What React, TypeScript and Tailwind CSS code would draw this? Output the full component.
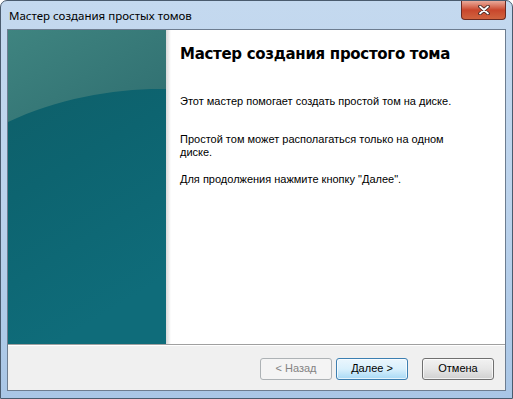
import React from 'react';

const uiFont = { fontFamily: 'Tahoma, "Liberation Sans", "DejaVu Sans", sans-serif' };

const SidePanel = () => (
  <div className="relative w-[158px] shrink-0 bg-[#0f6470] overflow-hidden">
    <svg className="absolute inset-0" width="158" height="314" viewBox="0 0 158 314" preserveAspectRatio="none">
      <defs>
        <linearGradient id="base" x1="0" y1="0" x2="0.3" y2="1">
          <stop offset="0" stopColor="#0f5d66" />
          <stop offset="0.5" stopColor="#0d6470" />
          <stop offset="1" stopColor="#0f6c7a" />
        </linearGradient>
        <linearGradient id="top" x1="0" y1="0" x2="1" y2="1">
          <stop offset="0" stopColor="#3f8480" />
          <stop offset="1" stopColor="#2f6e70" />
        </linearGradient>
      </defs>
      <rect x="0" y="0" width="158" height="314" fill="url(#base)" />
      <path d="M0 0 H158 V59 C110 58 50 68 0 92 Z" fill="url(#top)" />
    </svg>
  </div>
);

const Button = ({ label, variant }: { label: string; variant: 'default' | 'primary' | 'disabled' }) => {
  const cls =
    variant === 'primary'
      ? 'border-[#3c7fb1] bg-gradient-to-b from-[#eaf6fd] via-[#d9f0fc] to-[#a7d9f5] text-black shadow-[inset_0_0_0_1px_rgba(255,255,255,0.7)]'
      : variant === 'disabled'
      ? 'border-[#adb2b5] bg-[#f4f4f4] text-[#838383]'
      : 'border-[#707070] bg-gradient-to-b from-[#f2f2f2] via-[#e6e6e6] to-[#d0d0d0] text-black shadow-[inset_0_0_0_1px_rgba(255,255,255,0.7)]';
  return (
    <div className={`w-[72px] h-[22px] rounded-[3px] border flex items-center justify-center text-[11px] ${cls}`}>
      {label}
    </div>
  );
};

export default function App() {
  return (
    <div className="w-[513px] h-[399px] bg-white">
      <div className="w-[513px] h-[399px] rounded-t-[7px] border border-[#4a5b6e] bg-gradient-to-b from-[#c4d9ef] via-[#bcd3ec] to-[#a9c6e6] flex flex-col">
        <div className="h-[28px] flex items-start justify-between">
          <div className="pl-[8px] pt-[9px] text-[11.5px] text-black leading-none" style={{ fontFamily: '"Noto Sans", "Open Sans", sans-serif' }}>
            Мастер создания простых томов
          </div>
          <div className="mr-[6px] w-[45px] h-[19px] rounded-b-[4px] border border-t-0 border-[#6b2a22] bg-gradient-to-b from-[#e9a99a] via-[#c9462c] to-[#d0633f] flex items-center justify-center">
            <svg width="12" height="10" viewBox="0 0 12 10">
              <path d="M2 1.5 L10 8.5 M10 1.5 L2 8.5" stroke="#3b2320" strokeWidth="3.6" strokeLinecap="round" />
              <path d="M2 1.5 L10 8.5 M10 1.5 L2 8.5" stroke="#ffffff" strokeWidth="1.8" strokeLinecap="round" />
            </svg>
          </div>
        </div>
        <div className="mx-[6px] mb-[7px] flex-1 border border-[#6d7d90] flex flex-col bg-white" style={uiFont}>
          <div className="flex h-[314px]">
            <SidePanel />
            <div className="w-[5px] bg-gradient-to-r from-[#d8d8d8] to-white" />
            <div className="flex-1 pl-[9px] pt-[14px] text-black">
              <h1 className="text-[15px] font-bold leading-[20px] tracking-[-0.3px]" style={{ fontFamily: '"DejaVu Sans", Verdana, sans-serif' }}>
                Мастер создания простого тома
              </h1>
              <p className="mt-[31px] text-[11px] leading-[13px]">Этот мастер помогает создать простой том на диске.</p>
              <p className="mt-[25px] text-[11px] leading-[13px]">
                Простой том может располагаться только на одном
                <br />
                диске.
              </p>
              <p className="mt-[14px] text-[11px] leading-[13px]">Для продолжения нажмите кнопку "Далее".</p>
            </div>
          </div>
          <div className="flex-1 bg-[#f0f0f0] border-t border-[#a0a0a0] shadow-[inset_0_1px_0_#ffffff] flex items-center justify-end pr-[11px] pt-[2px]">
            <Button label="< Назад" variant="disabled" />
            <div className="w-[4px]" />
            <Button label="Далее >" variant="primary" />
            <div className="w-[14px]" />
            <Button label="Отмена" variant="default" />
          </div>
        </div>
      </div>
    </div>
  );
}
